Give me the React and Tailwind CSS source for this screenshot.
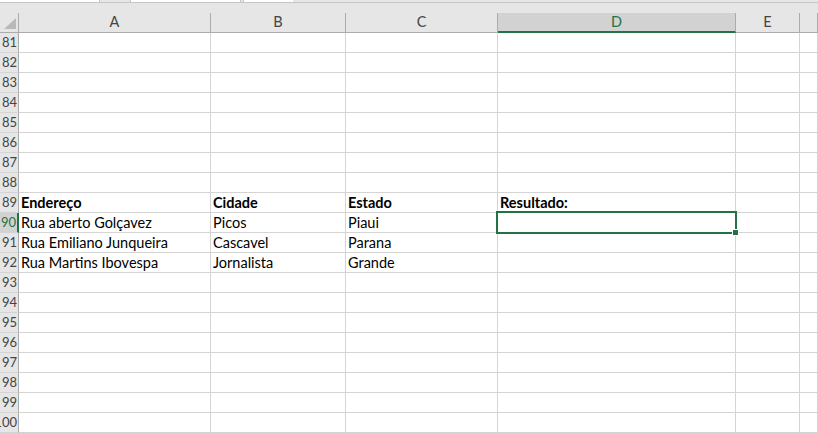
import React from "react";

const cols = [
  { k: "A", w: "w-[192px]" },
  { k: "B", w: "w-[135px]" },
  { k: "C", w: "w-[152px]" },
  { k: "D", w: "w-[238px]" },
  { k: "E", w: "w-[64px]" },
  { k: "F", w: "w-[18px]" },
];

const data = {
  89: ["Endereço", "Cidade", "Estado", "Resultado:"],
  90: ["Rua aberto Golçavez", "Picos", "Piaui"],
  91: ["Rua Emiliano Junqueira", "Cascavel", "Parana"],
  92: ["Rua Martins Ibovespa", "Jornalista", "Grande"],
};

const rows = Array.from({ length: 20 }, (_, i) => 81 + i);

export default function App() {
  return (
    <div
      className="relative w-[818px] h-[433px] overflow-hidden bg-white text-[14.5px] text-black"
      style={{ fontFamily: "Lato, 'Open Sans', sans-serif" }}
    >
      {/* top strip (bottom of formula bar) */}
      <div className="flex h-[3px] bg-[#e6e6e6] border-b border-[#c6c6c6]">
        <div className="w-[100px] bg-white border-r border-[#c6c6c6]" />
        <div className="w-[30px]" />
        <div className="w-[111px] bg-white border-x border-[#c6c6c6]" />
        <div className="w-[2px]" />
        <div className="w-[50px] bg-white border-l border-[#c6c6c6]" />
      </div>

      {/* column headers */}
      <div className="flex items-end h-[30px] bg-[#e6e6e6]">
        <div className="relative w-[19px] h-[20px] border-r border-b border-[#ababab]">
          <div className="absolute left-[4px] top-[5px] w-0 h-0 border-l-[12px] border-l-transparent border-b-[11px] border-b-[#b9b9b9]" />
        </div>
        {cols.map((c) => (
          <div
            key={c.k}
            className={`${c.w} shrink-0 h-[20px] flex items-center justify-center border-r ${
              c.k === "D"
                ? "bg-[#d2d2d2] text-[#217346] border-b-2 border-b-[#217346] border-r-[#ababab]"
                : "text-[#444] border-b border-[#ababab]"
            } leading-none`}
          >
            {c.k !== "F" && c.k}
          </div>
        ))}
      </div>

      {/* grid rows */}
      {rows.map((r) => {
        const vals = data[r] || [];
        const bold = r === 89;
        return (
          <div key={r} className="flex h-[20px]">
            <div
              className={`w-[19px] shrink-0 overflow-hidden flex justify-end pr-[1px] text-[13px] leading-[19px] border-b border-b-[#d4d4d4] ${
                r === 90
                  ? "bg-[#d2d2d2] text-[#217346] border-r-2 border-r-[#217346]"
                  : "bg-[#e6e6e6] text-[#444] border-r border-r-[#ababab]"
              }`}
            >
              <span className="shrink-0">{r}</span>
            </div>
            {cols.map((c, i) => (
              <div
                key={c.k}
                className={`${c.w} shrink-0 overflow-hidden whitespace-nowrap pl-[2px] leading-[19px] border-r border-b border-[#d4d4d4] ${
                  bold ? "font-bold" : ""
                }`}
              >
                {vals[i] || ""}
              </div>
            ))}
          </div>
        );
      })}

      {/* active cell D90 */}
      <div className="absolute left-[496px] top-[211px] w-[241px] h-[23px] border-2 border-[#217346]" />
      <div className="absolute left-[732px] top-[229px] w-[7px] h-[7px] bg-[#217346] border border-white" />
    </div>
  );
}
